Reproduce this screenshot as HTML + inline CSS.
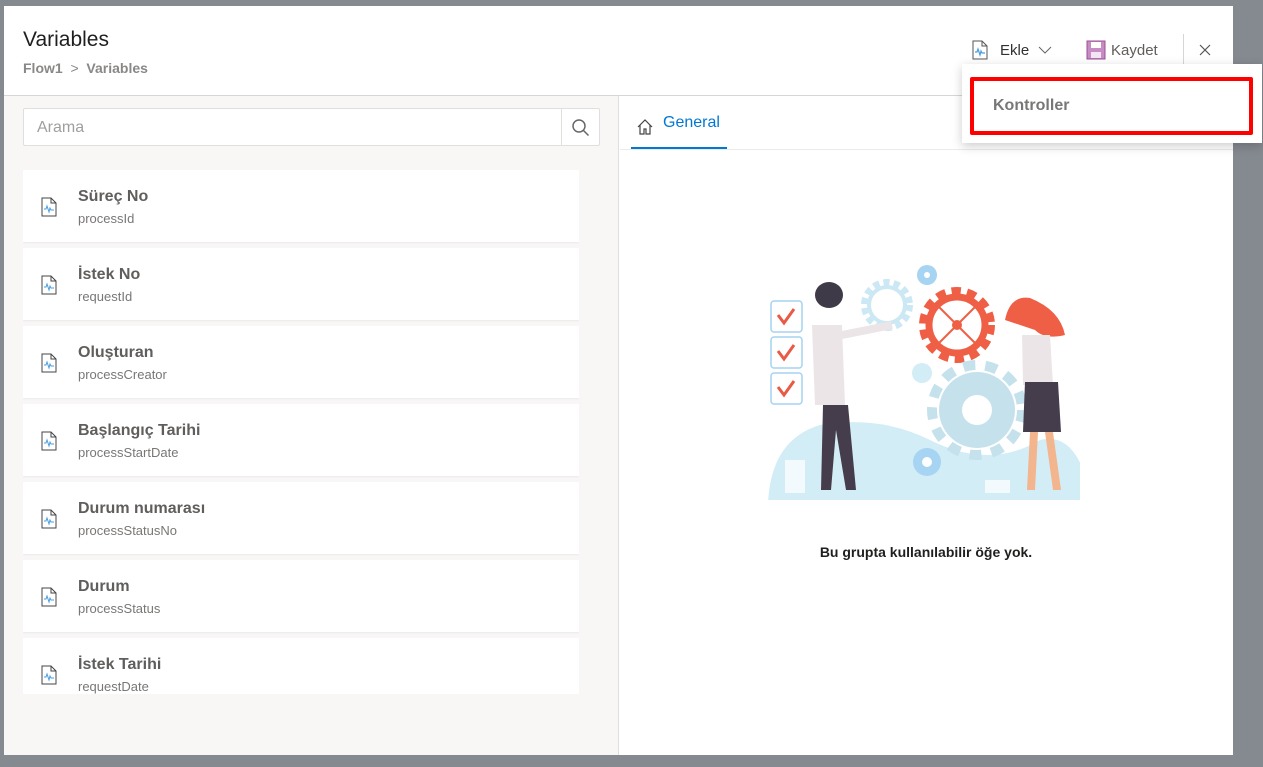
<!DOCTYPE html>
<html><head><meta charset="utf-8"><style>
*{box-sizing:border-box;margin:0;padding:0}
body{width:1263px;height:767px;background:#858a90;font-family:"Segoe UI","Liberation Sans",sans-serif;position:relative;overflow:hidden}
.modal{position:absolute;left:4px;top:6px;width:1229px;height:749px;background:#fff}
.title{position:absolute;left:19px;top:22px;font-size:21px;color:#201f1e}
.bc{position:absolute;left:19px;top:54px;font-size:14px;color:#8a8886;font-weight:600}
.hdrline{position:absolute;left:0;top:89px;width:1229px;height:1px;background:#d6d6d6}
.left{position:absolute;left:0;top:90px;width:615px;height:659px;background:#f8f7f6;border-right:1px solid #e1dfdd}
.search{position:absolute;left:19px;top:12px;width:577px;height:38px;background:#fff;border:1px solid #e1dfdd;border-radius:2px}
.search span{position:absolute;left:13px;top:10px;font-size:16px;color:#a19f9d}
.search .btn{position:absolute;right:0;top:0;width:38px;height:36px;border-left:1px solid #e1dfdd}
.list{position:absolute;left:19px;top:74px;width:556px;height:524px;overflow:hidden}
.card{height:72px;background:#fff;margin-bottom:6px;position:relative;box-shadow:0 1px 2px rgba(0,0,0,.06)}
.card svg{position:absolute;left:18px;top:27px}
.card b{position:absolute;left:55px;top:18px;font-size:16px;color:#605e5c;font-weight:700}
.card i{position:absolute;left:55px;top:41px;font-size:13px;color:#797775;font-style:normal}
.tab{position:absolute;left:659px;top:117px;font-size:16px;color:#0078d4}
.tabline{position:absolute;left:627px;top:141px;width:96px;height:2px;background:#0078d4}
.tabsep{position:absolute;left:616px;top:143px;width:613px;height:1px;background:#edebe9}
.empty{position:absolute;left:615px;top:538px;width:614px;text-align:center;font-size:14px;font-weight:700;color:#201f1e}
.drop{position:absolute;left:962px;top:64px;width:300px;height:79px;background:#fff;box-shadow:0 3px 10px rgba(0,0,0,.2)}
.red{position:absolute;left:8px;top:13px;width:283px;height:58px;border:4px solid #f00;border-radius:2px}
.red span{position:absolute;left:19px;top:16px;font-size:16px;font-weight:700;color:#797775}
</style></head><body>
<div class="modal">
<div class="title">Variables</div>
<div class="bc">Flow1 &nbsp;<span style="font-weight:400">&gt;</span>&nbsp; Variables</div>
<svg style="position:absolute;left:967px;top:34px" width="18" height="20" viewBox="0 0 18 20"><path d="M2 1h9l5 5v13H2z" fill="#fff" stroke="#555"/><path d="M11 1v5h5" fill="none" stroke="#555"/><path d="M4 12h2l1-3 2 6 1-4 1 2h3" fill="none" stroke="#4a9de0" stroke-width="1.2"/></svg>
<div style="position:absolute;left:996px;top:36px;font-size:15px;color:#323130">Ekle</div>
<svg style="position:absolute;left:1034px;top:40px" width="14" height="9"><path d="M1 1l6 6 6-6" fill="none" stroke="#666"/></svg>
<svg style="position:absolute;left:1082px;top:34px" width="20" height="20" viewBox="0 0 20 20"><rect x="1" y="1" width="18" height="18" fill="#c88cc4" stroke="#9a4f96"/><rect x="5" y="2" width="10" height="6" fill="#fff"/><rect x="5" y="12" width="10" height="6" fill="#f3e6f2"/></svg>
<div style="position:absolute;left:1107px;top:36px;font-size:15px;color:#605e5c">Kaydet</div>
<div style="position:absolute;left:1179px;top:28px;width:1px;height:32px;background:#d6d6d6"></div>
<svg style="position:absolute;left:1195px;top:38px" width="12" height="12"><path d="M1 1l10 10M11 1L1 11" stroke="#555" stroke-width="1.2"/></svg>
<div class="hdrline"></div>
<div class="left">
<div class="search"><span>Arama</span><div class="btn"><svg style="position:absolute;left:9px;top:9px" width="20" height="20"><circle cx="8" cy="8" r="6" fill="none" stroke="#666" stroke-width="1.5"/><path d="M12.5 12.5l5 5" stroke="#666" stroke-width="1.5"/></svg></div></div>
<div class="list">
<div class="card"><svg width="16" height="20" viewBox="0 0 16 20"><path d="M1 1h9l5 5v13H1z" fill="#fff" stroke="#444"/><path d="M10 1v5h5" fill="none" stroke="#444"/><path d="M3 12h2l1-3 2 6 1-4 1 2h3" fill="none" stroke="#4a9de0"/></svg><b>Süreç No</b><i>processId</i></div>
<div class="card"><svg width="16" height="20" viewBox="0 0 16 20"><path d="M1 1h9l5 5v13H1z" fill="#fff" stroke="#444"/><path d="M10 1v5h5" fill="none" stroke="#444"/><path d="M3 12h2l1-3 2 6 1-4 1 2h3" fill="none" stroke="#4a9de0"/></svg><b>İstek No</b><i>requestId</i></div>
<div class="card"><svg width="16" height="20" viewBox="0 0 16 20"><path d="M1 1h9l5 5v13H1z" fill="#fff" stroke="#444"/><path d="M10 1v5h5" fill="none" stroke="#444"/><path d="M3 12h2l1-3 2 6 1-4 1 2h3" fill="none" stroke="#4a9de0"/></svg><b>Oluşturan</b><i>processCreator</i></div>
<div class="card"><svg width="16" height="20" viewBox="0 0 16 20"><path d="M1 1h9l5 5v13H1z" fill="#fff" stroke="#444"/><path d="M10 1v5h5" fill="none" stroke="#444"/><path d="M3 12h2l1-3 2 6 1-4 1 2h3" fill="none" stroke="#4a9de0"/></svg><b>Başlangıç Tarihi</b><i>processStartDate</i></div>
<div class="card"><svg width="16" height="20" viewBox="0 0 16 20"><path d="M1 1h9l5 5v13H1z" fill="#fff" stroke="#444"/><path d="M10 1v5h5" fill="none" stroke="#444"/><path d="M3 12h2l1-3 2 6 1-4 1 2h3" fill="none" stroke="#4a9de0"/></svg><b>Durum numarası</b><i>processStatusNo</i></div>
<div class="card"><svg width="16" height="20" viewBox="0 0 16 20"><path d="M1 1h9l5 5v13H1z" fill="#fff" stroke="#444"/><path d="M10 1v5h5" fill="none" stroke="#444"/><path d="M3 12h2l1-3 2 6 1-4 1 2h3" fill="none" stroke="#4a9de0"/></svg><b>Durum</b><i>processStatus</i></div>
<div class="card"><svg width="16" height="20" viewBox="0 0 16 20"><path d="M1 1h9l5 5v13H1z" fill="#fff" stroke="#444"/><path d="M10 1v5h5" fill="none" stroke="#444"/><path d="M3 12h2l1-3 2 6 1-4 1 2h3" fill="none" stroke="#4a9de0"/></svg><b>İstek Tarihi</b><i>requestDate</i></div>
</div>
</div>
<svg style="position:absolute;left:632px;top:112px" width="18" height="18" viewBox="0 0 18 18"><path d="M2 9L9 2l7 7M4 7v9h4v-5h2v5h4V7" fill="none" stroke="#444" stroke-width="1.2"/></svg>
<div class="tab" style="top:108px">General</div>
<div class="tabline"></div><div class="tabsep"></div>
<svg style="position:absolute;left:746px;top:244px" width="330" height="250" viewBox="750 250 330 250">
<path d="M768 505 Q770 440 820 425 Q880 415 930 440 Q990 470 1040 440 Q1080 430 1092 505z" fill="#d3edf6"/>
<g fill="#fff" stroke="#a6d4f2" stroke-width="1.5"><rect x="771" y="301" width="31" height="31" rx="3"/><rect x="771" y="337" width="31" height="31" rx="3"/><rect x="771" y="373" width="31" height="31" rx="3"/></g>
<g fill="none" stroke="#e85a45" stroke-width="3"><path d="M778 315l6 8 10-14M778 351l6 8 10-14M778 387l6 8 10-14"/></g>
<circle cx="887" cy="305" r="22" fill="none" stroke="#cce8f4" stroke-width="8" stroke-dasharray="6 4"/>
<circle cx="887" cy="305" r="18" fill="none" stroke="#cce8f4" stroke-width="4"/>
<circle cx="957" cy="325" r="33" fill="none" stroke="#ef5f45" stroke-width="10" stroke-dasharray="9 6"/>
<circle cx="957" cy="325" r="28" fill="none" stroke="#ef5f45" stroke-width="7"/>
<path d="M937 305l40 40M977 305l-40 40" stroke="#ef5f45" stroke-width="2"/><circle cx="957" cy="325" r="5" fill="#ef5f45"/>
<circle cx="977" cy="410" r="38" fill="#c5e2ec"/><circle cx="977" cy="410" r="15" fill="#fff"/>
<circle cx="977" cy="410" r="45" fill="none" stroke="#c5e2ec" stroke-width="10" stroke-dasharray="12 10"/>
<circle cx="927" cy="275" r="10" fill="#a6d4f2"/><circle cx="927" cy="275" r="3" fill="#fff"/>
<circle cx="922" cy="373" r="10" fill="#d3edf6"/><circle cx="927" cy="462" r="14" fill="#a6d4f2"/><circle cx="927" cy="462" r="5" fill="#fff"/>
<path d="M812 325h30l3 80h-30z" fill="#ebe5e8"/><path d="M823 405h25l8 85h-10l-10-60-5 60h-10z" fill="#463d4c"/>
<ellipse cx="829" cy="295" rx="14" ry="13" fill="#3f3a48"/><path d="M842 335l50-10" stroke="#ebe5e8" stroke-width="8"/>
<path d="M1005 320 Q1010 295 1030 298 Q1060 310 1065 335 Q1045 340 1035 330" fill="#ef5f45"/>
<path d="M1022 335h28l3 50h-30z" fill="#ebe5e8"/><path d="M1025 382h33l3 50h-38z" fill="#463d4c"/><path d="M1030 432h8l-3 58h-8zM1045 432h8l8 58h-8z" fill="#f3b58e"/>
<rect x="785" y="460" width="20" height="33" fill="#f3fafd"/><rect x="985" y="480" width="25" height="13" fill="#f3fafd"/>
</svg>
<div class="empty">Bu grupta kullanılabilir öğe yok.</div>
</div>
<div class="drop"><div class="red"><span>Kontroller</span></div></div>
</body></html>
